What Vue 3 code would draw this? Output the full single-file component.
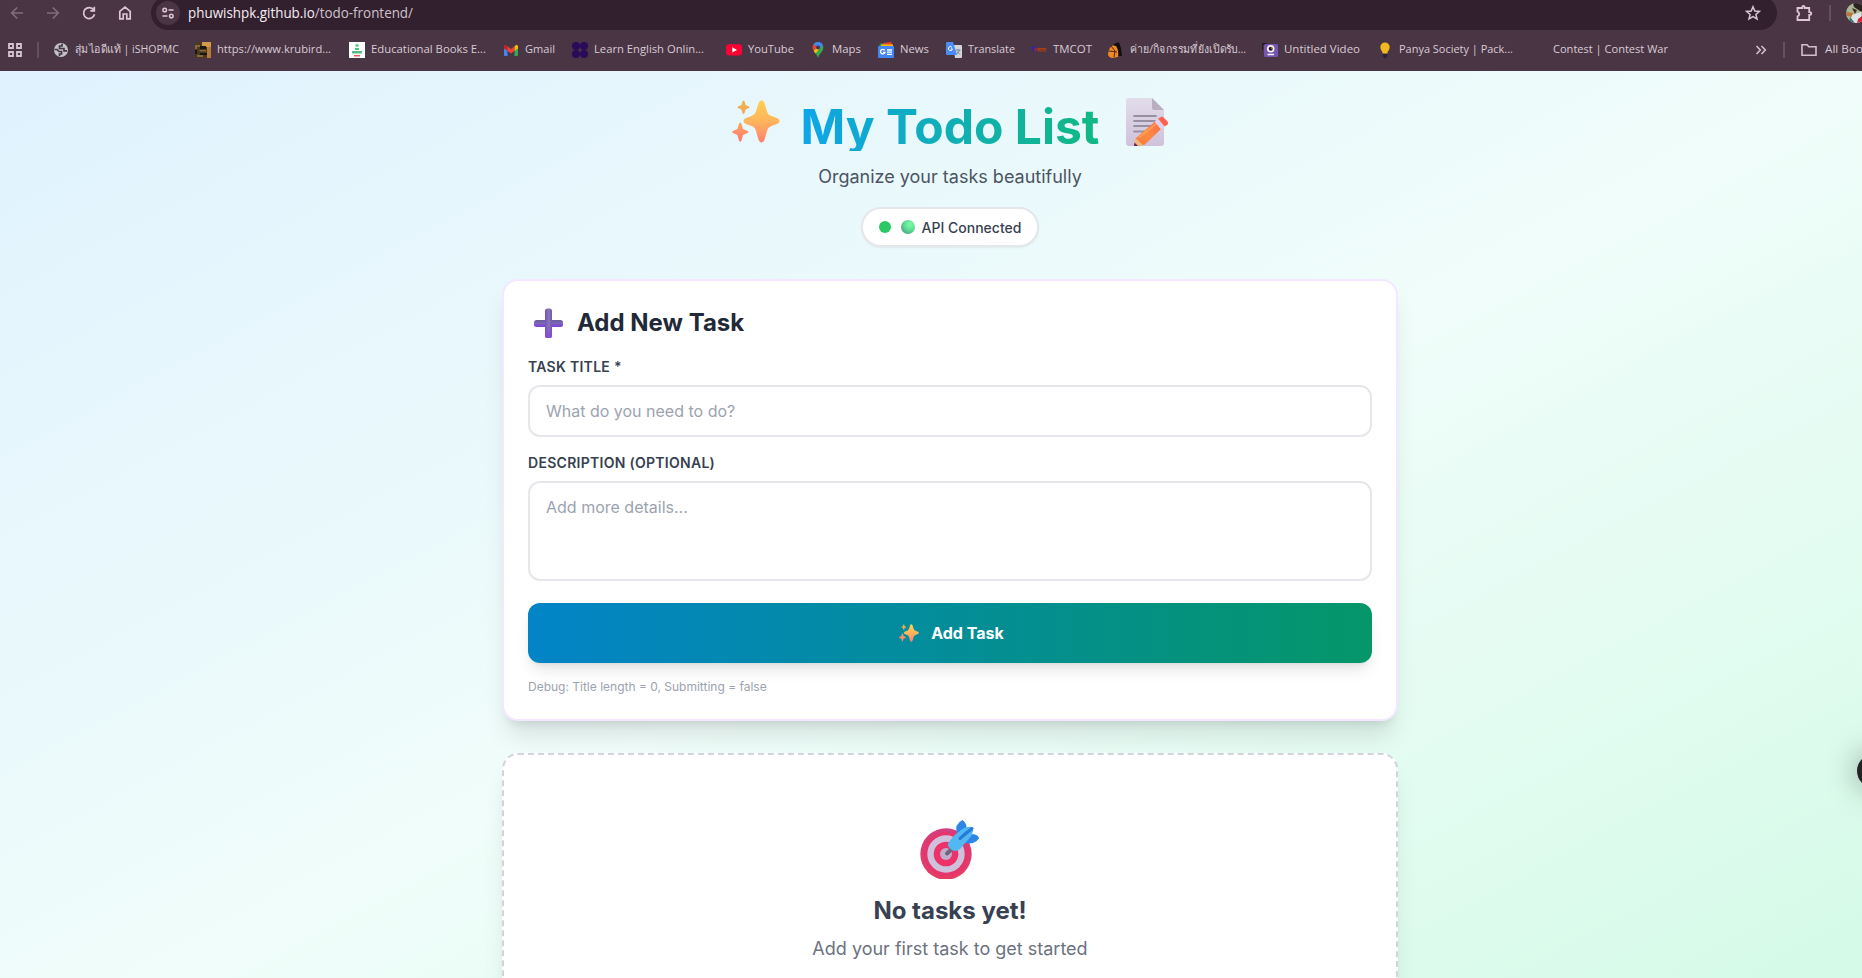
<script setup>
import { ref } from 'vue'

const title = ref('')
const details = ref('')
const submitting = ref(false)

const bookmarks = [
  { icon: 'globe', label: 'สุ่มไอดีแท้ | iSHOPMC', slot: 142, text: 104 },
  { icon: 'photo', label: 'https://www.krubird...', slot: 154, text: 114 },
  { icon: 'books', label: 'Educational Books E...', slot: 154, text: 115 },
  { icon: 'gmail', label: 'Gmail', slot: 69, text: 30 },
  { icon: 'clover', label: 'Learn English Onlin...', slot: 154, text: 110 },
  { icon: 'youtube', label: 'YouTube', slot: 84, text: 46 },
  { icon: 'maps', label: 'Maps', slot: 68, text: 29 },
  { icon: 'news', label: 'News', slot: 68, text: 29 },
  { icon: 'translate', label: 'Translate', slot: 85, text: 47 },
  { icon: 'tmcot', label: 'TMCOT', slot: 77, text: 39 },
  { icon: 'camp', label: 'ค่าย/กิจกรรมที่ยังเปิดรับ...', slot: 154, text: 116 },
  { icon: 'video', label: 'Untitled Video', slot: 115, text: 76 },
  { icon: 'bulb', label: 'Panya Society | Pack...', slot: 154, text: 114 },
  { icon: 'blank', label: 'Contest | Contest War', slot: 149, text: 115 },
]
</script>

<template>
  <div class="window">
    <svg class="defs" width="0" height="0" aria-hidden="true">
      <defs>
        <linearGradient id="gold" x1="0" y1="0" x2="0" y2="1">
          <stop offset="0" stop-color="#ffcf52" />
          <stop offset=".5" stop-color="#ffb45c" />
          <stop offset="1" stop-color="#ff7f6e" />
        </linearGradient>
        <linearGradient id="goldsmall" x1="0" y1="0" x2="0" y2="1">
          <stop offset="0" stop-color="#e9b54d" />
          <stop offset="1" stop-color="#f9a45a" />
        </linearGradient>
        <linearGradient id="coral" x1="0" y1="0" x2="0" y2="1">
          <stop offset="0" stop-color="#f9a85c" />
          <stop offset="1" stop-color="#ff7676" />
        </linearGradient>
        <symbol id="sparkles" viewBox="0 0 48 43">
          <path fill="url(#gold)" d="M29.5 0.5C31 .5 32 1.5 32.600 3.500L35 11.500Q36 15 39.500 16L45.500 18.300Q47.500 19.200 47.500 21T45.500 23.700L39.500 26Q36 27.200 35 31L32.600 39.500Q31.500 42.500 29.500 42.500T26.400 39.500L24 31Q23 27.200 19.500 26L13.500 23.700Q11.500 22.800 11.500 21T13.500 18.300L19.500 16Q23 14.800 24 11.500L26.400 3.500Q27.500 .5 29.500 .5Z" />
          <path fill="url(#goldsmall)" d="M11.500 .5Q12.400 .5 12.700 2L13.600 5L16.500 6.300Q17.500 6.800 17.500 7.300T16.500 8.300L13.600 9.500L12.700 12.500Q12.300 14 11.500 14T10.300 12.500L9.400 9.500L6.500 8.300Q5.500 7.800 5.500 7.300T6.500 6.300L9.400 5L10.300 2Q10.600 .5 11.500 .5Z" />
          <path fill="url(#coral)" d="M8.200 22.500Q9.200 22.500 9.600 24.200L11 29L15 30.700Q16.400 31.200 16.400 32T15 33.300L11 35L9.600 40Q9.200 41.800 8.200 41.800T6.800 40L5.400 35L1.500 33.300Q.2 32.800 .2 32T1.500 30.700L5.400 29L6.800 24.200Q7.200 22.500 8.200 22.500Z" />
        </symbol>
      </defs>
    </svg>

    <header class="chrome">
      <div class="toolbar">
        <div class="nav">
          <svg class="dim" width="16" height="16" viewBox="0 0 16 16"><path d="M14 8H3M8.200 2.500L2.700 8l5.500 5.500" /></svg>
          <svg class="dim" width="16" height="16" viewBox="0 0 16 16"><path d="M2 8h11M7.800 2.500L13.300 8l-5.500 5.500" /></svg>
          <svg width="16" height="16" viewBox="0 0 16 16"><path d="M12.700 5A5.500 5.500 0 1 0 13.500 9.300M13.300 1.800V5.800H9.300" /></svg>
          <svg width="16" height="16" viewBox="0 0 16 16"><path d="M2.800 6.300L8 2.200l5.200 4.100v7.500H9.800V9H6.200v4.800H2.800Z" /></svg>
        </div>
        <div class="omnibox">
          <span class="site">
            <svg width="14" height="14" viewBox="0 0 14 14"><circle cx="3.700" cy="4" r="1.800" /><path d="M7.500 4H12.500M1.500 10H6.500" /><circle cx="10.300" cy="10" r="1.800" /></svg>
          </span>
          <svg class="url" width="226" height="24">
            <text x="0" y="17" textLength="225" lengthAdjust="spacingAndGlyphs"><tspan class="host">phuwishpk.github.io</tspan><tspan>/todo-frontend/</tspan></text>
          </svg>
          <svg class="star" width="16" height="16" viewBox="0 0 16 16"><path d="M8 1.700L9.800 6l4.600.4-3.500 3 1.100 4.500L8 11.500 4 13.900l1.100-4.500-3.500-3L6.200 6Z" /></svg>
        </div>
        <svg class="ext" width="18" height="18" viewBox="0 0 18 18"><path d="M2.500 4H7.300V3.200A1 1 0 0 1 9.700 3.200V4H14.200V8.200H15A1 1 0 0 1 15 10.800H14.200V16H2.500V12.300A2.400 2.400 0 0 0 2.500 7.700Z" /></svg>
        <span class="sep"></span>
        <svg class="avatar" width="20" height="20" viewBox="0 0 20 20">
          <clipPath id="face"><circle cx="10" cy="10" r="10" /></clipPath>
          <g clip-path="url(#face)">
            <rect width="20" height="20" fill="#a9b795" /><path d="M7 0H20V10L14 8 8 4Z" fill="#29221f" />
            <path d="M0 9L7 10 6 14 1 13Z" fill="#bd7435" /><path d="M6 5L11 7 9 11Z" fill="#4a2a21" />
            <path d="M6 12L15 9 16 20H4Z" fill="#dce4e8" /><path d="M12 16L16 13V20H11Z" fill="#d12731" /><path d="M4 14L9 20H3Z" fill="#397773" />
          </g>
        </svg>
      </div>

      <nav class="bookmarks">
        <svg class="apps" width="16" height="16" viewBox="0 0 16 16"><path d="M2 2H6V6H2ZM10 2H14V6H10ZM2 10H6V14H2ZM10 10H14V14H10Z" /></svg>
        <span class="sep"></span>
        <div class="marks">
          <a v-for="b in bookmarks" :key="b.label" class="mark" :style="{ width: b.slot + 'px' }">
            <svg class="favicon" width="16" height="16" viewBox="0 0 16 16">
              <template v-if="b.icon === 'globe'">
                <circle cx="8" cy="8" r="7" fill="#bfc3c8" />
                <path d="M1.500 7.500H4L6 9.500H8.500V12H6.500V14M9 1.800V4H6.500V6.500H11V8.800H14" fill="none" stroke="#4a3545" stroke-width="1.700" />
              </template>
              <template v-else-if="b.icon === 'photo'">
                <rect width="16" height="16" fill="#4b3820" /><rect x="7" width="9" height="5" fill="#d39b47" /><rect x="12" y="5" width="4" height="11" fill="#b47b39" />
                <path d="M0 3H5V5H2V7H0ZM4 8H11V9.500H5ZM2 13H8V15H2Z" fill="#87683b" /><path d="M5 4H11V7H5ZM5 11H12V13H5ZM0 8H2V12H0Z" fill="#171814" />
              </template>
              <template v-else-if="b.icon === 'books'">
                <rect width="16" height="16" fill="#fff" /><circle cx="8" cy="3.500" r="1.800" fill="#72cf99" /><path d="M6 6H10V8H6ZM3 9H13V11.500H3Z" fill="#53bd83" /><path d="M5 13H11V14.500H5Z" fill="#e65a58" />
              </template>
              <template v-else-if="b.icon === 'gmail'">
                <path d="M1 3.500L4.500 6V14H2Q1 14 1 13Z" fill="#4285f4" /><path d="M15 3.500L11.500 6V14H14Q15 14 15 13Z" fill="#34a853" /><path d="M11.500 4.500L13 3Q15 2.500 15 4.500V6.500L11.500 9Z" fill="#fbbc04" />
                <path d="M1 4.500Q1 2.500 3 3L4.500 4.200V9L1 6.500Z" fill="#c5221f" /><path d="M4.500 4.200L8 7 11.500 4.200V9L8 11.600 4.500 9Z" fill="#ea4335" />
              </template>
              <g v-else-if="b.icon === 'clover'" fill="#280b5b"><circle cx="4" cy="4" r="4" /><circle cx="12" cy="4" r="4" /><circle cx="4" cy="12" r="4" /><circle cx="12" cy="12" r="4" /></g>
              <template v-else-if="b.icon === 'youtube'"><rect y="2.300" width="16" height="11.200" rx="3" fill="#ff0033" /><path d="M6.300 5.300V10.500L11 7.900Z" fill="#fff" /></template>
              <template v-else-if="b.icon === 'maps'">
                <path d="M8 0A5.300 5.300 0 0 1 13.300 5.500C13.300 9.500 9.500 11 8 16C6.500 11 2.700 9.500 2.700 5.500A5.300 5.300 0 0 1 8 0Z" fill="#34a853" />
                <path d="M8 0A5.300 5.300 0 0 1 12.800 3L8 8.500 3.800 2.200Q5.500 0 8 0Z" fill="#4285f4" /><path d="M3.800 2.200L7 5 3.900 9Q2.700 7.500 2.700 5.500 2.700 3.500 3.800 2.200Z" fill="#ea4335" />
                <path d="M6.500 6L9.500 7 5.500 11.500Q4.500 10 3.900 9Z" fill="#fbbc04" /><circle cx="8" cy="5.500" r="2" fill="#4a3545" />
              </template>
              <template v-else-if="b.icon === 'news'">
                <path d="M1.500 1.500H10V6H1.500Z" fill="#0c9d58" /><path d="M5 1L13.500 0 14 5H5Z" fill="#ea4335" /><path d="M3 2.500H15V6H3Z" fill="#fbbc04" /><rect y="4" width="16" height="12" rx="1" fill="#4285f4" />
                <path d="M6.700 8.300A2.300 2.300 0 1 0 7 10.300H5M9 8H14M9 10.200H14M9 12.400H14" fill="none" stroke="#fff" stroke-width="1.300" />
              </template>
              <template v-else-if="b.icon === 'translate'">
                <path d="M7 3H15Q16 3 16 4V15Q16 16 15 16H9Z" fill="#d3d5d8" /><path d="M1 0H7L11 13H1Q0 13 0 12V1Q0 0 1 0Z" fill="#4c8bf5" />
                <path d="M6 5.300A2 2 0 1 0 6.400 7H4.800" fill="none" stroke="#fff" stroke-width="1" /><path d="M9.500 8H14.500M12 7V8M13.500 8Q12.500 11 10.500 12M11 9.500L14 12.500" fill="none" stroke="#687f96" stroke-width=".9" />
              </template>
              <template v-else-if="b.icon === 'tmcot'"><path d="M0 5.500H4M2 5.500V9.500" stroke="#2a25c3" stroke-width="1.400" /><circle cx="5" cy="7.500" r="1.700" fill="#982637" /><path d="M7 6H15.500L14.500 9.500H7Z" fill="#a3401d" /><path d="M8 8H14" stroke="#6a3529" /></template>
              <template v-else-if="b.icon === 'camp'">
                <path d="M5 4Q7 0 11 .5L13 6 14 14 10 14 8 6Z" fill="#12100f" /><path d="M1 8Q3 2 8 4Q11 8 10 15L4 16Q0 15 0 12Z" fill="#ef8922" /><path d="M3 4L7 9 6 15M1 9L9 10" fill="none" stroke="#4e281b" />
              </template>
              <template v-else-if="b.icon === 'video'">
                <path d="M0 1H5V3H1V8H0Z" fill="#211c28" /><rect x="2" y="2" width="14" height="13" rx="1.500" fill="#7556ae" /><circle cx="8.700" cy="6.700" r="3.800" fill="#f4eff4" /><circle cx="8.700" cy="6.700" r="2" fill="#24121c" /><circle cx="9.500" cy="6" r=".8" fill="#ef7f2b" /><path d="M5.500 12.500H12" stroke="#f6eefc" stroke-width="1.500" />
              </template>
              <template v-else-if="b.icon === 'bulb'"><path d="M8 .5A4.700 4.700 0 0 1 12.700 5C12.700 8 10.500 9 10.300 11.500H5.700C5.500 9 3.300 8 3.300 5A4.700 4.700 0 0 1 8 .5Z" fill="#f2b91f" /><path d="M5.700 12H10.300V14L9 16H7L5.700 14Z" fill="#252239" /></template>
            </svg>
            <svg class="label" :width="b.text" height="20"><text x="0" y="13" :textLength="b.text" lengthAdjust="spacingAndGlyphs">{{ b.label }}</text></svg>
          </a>
        </div>
        <div class="trailing">
          <svg class="more" width="12" height="12" viewBox="0 0 12 12"><path d="M1.500 2L5.300 6l-3.800 4M6.500 2l3.800 4-3.800 4" /></svg>
          <span class="sep"></span>
          <svg class="folder" width="18" height="16" viewBox="0 0 18 16"><path d="M2 2.700H7L8.800 4.700H16V13.300H2Z" /></svg>
          <svg class="label" width="79" height="20"><text x="0" y="13" textLength="78" lengthAdjust="spacingAndGlyphs">All Bookmarks</text></svg>
        </div>
      </nav>
    </header>

    <main class="page">
      <section class="hero">
        <h1>
          <span class="emoji left"><svg width="48" height="43"><use href="#sparkles" /></svg></span>
          <span class="brand">My Todo List</span>
          <span class="emoji right">
            <svg width="43" height="48" viewBox="0 0 43 48">
              <linearGradient id="paper" x1="0" y1="0" x2="0" y2="1"><stop offset="0" stop-color="#e2dcea" /><stop offset="1" stop-color="#cfc2da" /></linearGradient>
              <linearGradient id="pencil" x1="1" y1="0" x2="0" y2="1"><stop offset="0" stop-color="#ff694a" /><stop offset=".5" stop-color="#ff8842" /><stop offset="1" stop-color="#f47c3d" /></linearGradient>
              <path d="M2 0H26L38 12V45Q38 48 35 48H3Q0 48 0 45V2Q0 0 2 0Z" fill="url(#paper)" />
              <path d="M26 0L38 12H28Q26 12 26 10Z" fill="#b9afc2" />
              <path d="M8 18H30M8 23H30M8 28H27M8 33.500H21" stroke="#9790a3" stroke-width="1.800" stroke-linecap="round" />
              <path d="M29 23.500L35 31 19 46.500 12 48 9.500 40.500Z" fill="url(#pencil)" />
              <path d="M13 39.500L30.500 25.500" stroke="#ffab5c" stroke-width="2.200" opacity=".6" />
              <path d="M28.500 23.500L32 20.500 38.500 28.500 35 31.500Z" fill="#ddd2ef" />
              <path d="M32 20.500L34.500 19.200Q36.500 18.200 38.300 20.200L41.500 23.500Q43 25 41.500 26.700L38.500 28.500Z" fill="#ff624f" />
              <path d="M9.500 40L17.500 47.500 8 48Z" fill="#f3b67e" /><path d="M8.500 44.500L12 48H8Z" fill="#5f244d" />
            </svg>
          </span>
        </h1>
        <p class="tagline">Organize your tasks beautifully</p>
        <div class="status">
          <span class="dot"></span>
          <span class="orb"></span>
          <span>API Connected</span>
        </div>
      </section>

      <section class="card">
        <h2>
          <svg width="42" height="36" viewBox="0 0 42 36">
            <linearGradient id="barh" x1="0" y1="0" x2="0" y2="1"><stop offset="0" stop-color="#6b5d98" /><stop offset=".5" stop-color="#7c67b8" /><stop offset=".7" stop-color="#804dd1" /><stop offset="1" stop-color="#8245dc" /></linearGradient>
            <linearGradient id="barv" x1="0" y1="0" x2="1" y2="0"><stop offset="0" stop-color="#7353b7" /><stop offset=".55" stop-color="#8875bd" /><stop offset="1" stop-color="#705aa5" /></linearGradient>
            <linearGradient id="barend" x1="0" y1="0" x2="0" y2="1"><stop offset=".6" stop-color="#8647dc" stop-opacity="0" /><stop offset="1" stop-color="#8647dc" /></linearGradient>
            <rect x="6" y="15" width="29" height="7" rx="2.500" fill="url(#barh)" /><rect x="17" y="3.500" width="7" height="29.500" rx="2.500" fill="url(#barv)" /><rect x="17" y="3.500" width="7" height="29.500" rx="2.500" fill="url(#barend)" />
          </svg>
          <span>Add New Task</span>
        </h2>
        <form @submit.prevent>
          <label for="task-title">Task title *</label>
          <input id="task-title" v-model="title" type="text" placeholder="What do you need to do?" />
          <label for="task-details">Description (optional)</label>
          <textarea id="task-details" v-model="details" placeholder="Add more details..."></textarea>
          <button type="submit">
            <svg width="20" height="18"><use href="#sparkles" /></svg>
            <span>Add Task</span>
          </button>
        </form>
        <p class="debug">Debug: Title length = {{ title.length }}, Submitting = {{ submitting }}</p>
      </section>

      <section class="empty">
        <svg class="target" width="60" height="60" viewBox="0 0 60 60">
          <linearGradient id="rim" x1="0" y1="0" x2="0" y2="1"><stop offset="0" stop-color="#d43d7f" /><stop offset="1" stop-color="#e83b61" /></linearGradient>
          <circle cx="26" cy="35" r="25.700" fill="url(#rim)" /><circle cx="26" cy="35" r="22" fill="#e4356d" /><circle cx="26" cy="35" r="18.700" fill="#cfc0dc" />
          <circle cx="26" cy="35" r="12.300" fill="#ec3269" /><circle cx="26" cy="35" r="6" fill="#c0adc9" />
          <path d="M27 34.500L33 29" stroke="#73647e" stroke-width="4" stroke-linecap="round" />
          <path d="M37 15Q34 5 42.500 1Q48 5 46 12L40 17ZM47 18L53 15Q59 16 59 19.500Q54 26 45 24Z" fill="#2d85e6" />
          <path d="M29 23Q35 14 45 8.500Q54 6 53 12Q52 17 47 22L40 30Q35 34 30.500 30T29 23Z" fill="#51b8f2" />
          <path d="M40 19.500L52 9.500M41 18.500L47 13" stroke="#257bd8" stroke-width="3" stroke-linecap="round" />
        </svg>
        <h3>No tasks yet!</h3>
        <p>Add your first task to get started</p>
      </section>
    </main>
    <span class="floating"></span>
  </div>
</template>

<style>
body { overflow: hidden; }
</style>

<style scoped>
.window { position: relative; width: 1862px; height: 978px; overflow: hidden; font-family: Inter, "Liberation Sans", sans-serif; color: #374151; }
.window *, .window *::before { box-sizing: border-box; }
.defs { position: absolute; }
.chrome { height: 71px; overflow: hidden; background: #4a3545; font-family: "Open Sans", "Noto Sans", sans-serif; }
.chrome svg { flex: none; }
.toolbar { display: flex; align-items: center; width: 1900px; height: 34px; margin-top: -4px; }
.nav { display: flex; gap: 20px; width: 151px; padding: 0 0 0 9px; flex: none; }
.nav svg, .star, .ext, .more, .folder, .apps, .site svg { fill: none; stroke: #dec6d8; stroke-width: 1.7; }
.nav svg.dim { stroke: #806c7b; }
.omnibox { display: flex; align-items: center; width: 1626px; height: 34px; padding: 0 16px 0 5px; border-radius: 17px; background: #33202f; flex: none; }
.site { display: grid; place-items: center; width: 24px; height: 24px; border-radius: 50%; background: #4a3545; }
.site svg { stroke-width: 1.5; }
.url { margin-left: 8px; overflow: visible; font-size: 14px; fill: #cfc1cb; }
.host { fill: #f6edf4; }
.star { margin-left: auto; stroke-width: 1.5; stroke: #d6c5d2; }
.ext { margin-left: 18px; stroke-width: 1.8; }
.sep { flex: none; width: 2px; height: 16px; background: #66505f; }
.toolbar .sep { margin-left: 16px; }
.avatar { margin-left: 15px; }
.bookmarks { display: flex; align-items: center; width: 1910px; height: 41px; padding-left: 7px; }
.apps { margin-top: -1px; stroke-width: 1.8; stroke: #d3c3d0; }
.bookmarks > .sep { margin: -1px 14px 0; }
.marks { display: flex; flex: none; width: 1702px; margin-top: -1px; }
.mark { display: flex; align-items: center; gap: 6px; flex: none; }
.label { overflow: visible; font-size: 11.500px; fill: #d8cbd4; }
.trailing { display: flex; align-items: center; flex: none; margin-top: -1px; }
.more { stroke-width: 1.6; stroke: #d0c0cc; }
.trailing .sep { margin: 0 15px 0 16px; }
.folder { stroke-width: 1.6; stroke: #d0c0cc; margin-right: 7px; }

.page { width: 1900px; height: 1010px; padding: 32px 502px; background: linear-gradient(to bottom right, #e0f2fe, #f0fdfa, #d1fae5); }
h1, h2, h3, p { margin: 0; }
.hero { display: flex; flex-direction: column; align-items: center; margin-bottom: 32px; }
h1 { display: flex; justify-content: center; gap: 16px; font-size: 48px; line-height: 48px; font-weight: 700; }
.emoji { display: block; width: 60px; height: 48px; }
.emoji svg { display: block; }
.emoji.left svg { margin: -3px 0 0 9px; }
.emoji.right svg { margin: -5px 0 0 9px; }
.brand { width: 302px; text-align: center; white-space: nowrap; background: linear-gradient(to right, #0ea5e9, #10b981); -webkit-background-clip: text; background-clip: text; color: transparent; }
.tagline { margin-top: 12px; font-size: 18px; line-height: 28px; color: #4b5563; }
.status { display: flex; align-items: center; height: 40px; margin-top: 16px; padding: 0 16px; border: 2px solid #e5e7eb; border-radius: 20px; background: #fff; box-shadow: 0 1px 2px rgb(0 0 0 / 6%); font-size: 14px; font-weight: 500; }
.dot { width: 12px; height: 12px; margin-right: 10px; border-radius: 50%; background: #2bc866; }
.orb { width: 14px; height: 14px; margin-right: 7px; border-radius: 50%; background: radial-gradient(circle at 65% 32%, #75f5a4 0 12%, #5fdb93 45%, #4aa587 78%, #527f7c); }
.card, .empty { border-radius: 16px; background: #fff; box-shadow: 0 20px 25px -5px rgb(0 0 0 / 10%), 0 8px 10px -6px rgb(0 0 0 / 10%); }
.card { height: 442px; padding: 24px; border: 2px solid #f3e8ff; }
h2 { display: flex; align-items: center; gap: 7px; margin-bottom: 16px; font-size: 24px; line-height: 36px; font-weight: 700; color: #1f2937; }
form { display: flex; flex-direction: column; }
label { margin-bottom: 8px; font-size: 14px; line-height: 20px; font-weight: 600; letter-spacing: .28px; text-transform: uppercase; }
input, textarea { width: 100%; margin: 0 0 16px; padding: 12px 16px; border: 2px solid #e5e7eb; border-radius: 12px; outline: 0; background: #fff; font: 16px/24px Inter, sans-serif; resize: none; }
input { height: 52px; }
textarea { height: 100px; margin-bottom: 22px; }
input::placeholder, textarea::placeholder { color: #9ca3af; opacity: 1; }
button { display: flex; align-items: center; justify-content: center; gap: 12px; height: 60px; padding: 0 0 0 3px; border: 0; border-radius: 12px; background: linear-gradient(to right, #0284c7, #059669); box-shadow: 0 10px 15px -3px rgb(0 0 0 / 10%), 0 4px 6px -4px rgb(0 0 0 / 10%); color: #fff; font: 700 16px/24px Inter, sans-serif; }
.debug { margin-top: 16px; font-size: 12px; line-height: 16px; color: #9ca3af; }
.empty { display: flex; flex-direction: column; align-items: center; height: 276px; margin-top: 32px; padding: 64px 0; border: 2px dashed #d1d5db; }
.target { flex: none; margin-bottom: 16px; }
h3 { font-size: 24px; line-height: 32px; font-weight: 700; color: #374151; }
.empty p { margin-top: 8px; font-size: 18px; line-height: 28px; color: #6b7280; }
.floating { position: absolute; left: 1857px; top: 754px; width: 34px; height: 34px; border-radius: 50%; background: #242424; box-shadow: 0 0 32px 0 rgb(0 0 0 / 40%); }
</style>
